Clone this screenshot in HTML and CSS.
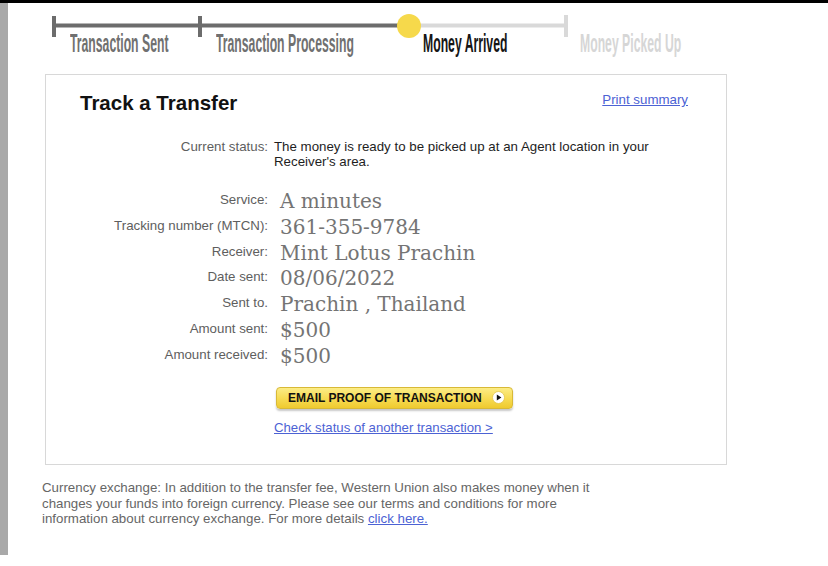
FILE: index.html
```html
<!DOCTYPE html>
<html lang="en">
<head>
<meta charset="utf-8">
<title>Track a Transfer</title>
<link rel="stylesheet" href="styles.css">
</head>
<body>
<div class="topbar"></div>
<div class="screen">
  <div class="rail"></div>
  <main class="main">
    <div class="stepper">
      <svg class="track" width="820" height="37" viewBox="0 0 820 37" aria-hidden="true">
        <line x1="46" y1="22.5" x2="401" y2="22.5" stroke="#6c6c6c" stroke-width="4"/>
        <line x1="401" y1="22.5" x2="558" y2="22.5" stroke="#d9d9d9" stroke-width="4"/>
        <rect x="44" y="13" width="4" height="21" fill="#6c6c6c"/>
        <rect x="190" y="13" width="4" height="21" fill="#6c6c6c"/>
        <rect x="556" y="12" width="4" height="22" fill="#d9d9d9"/>
        <circle cx="401" cy="23" r="12" fill="#f6d94b"/>
      </svg>
      <div class="step-labels">
        <div class="step s1 done"><span class="step-text">Transaction Sent</span></div>
        <div class="step s2 done"><span class="step-text">Transaction Processing</span></div>
        <div class="step s3 current"><span class="step-text">Money Arrived</span></div>
        <div class="step s4 todo"><span class="step-text">Money Picked Up</span></div>
      </div>
    </div>

    <section class="card">
      <div class="card-head">
        <h1 class="title">Track a Transfer</h1>
        <a class="link print" href="#">Print summary</a>
      </div>

      <div class="status">
        <div class="label">Current status:</div>
        <div class="status-value">The money is ready to be picked up at an Agent location in your Receiver's area.</div>
      </div>

      <div class="details">
        <div class="label">Service:</div><div class="value">A minutes</div>
        <div class="label">Tracking number (MTCN):</div><div class="value">361-355-9784</div>
        <div class="label">Receiver:</div><div class="value">Mint Lotus Prachin</div>
        <div class="label">Date sent:</div><div class="value">08/06/2022</div>
        <div class="label">Sent to.</div><div class="value">Prachin , Thailand</div>
        <div class="label">Amount sent:</div><div class="value">$500</div>
        <div class="label">Amount received:</div><div class="value">$500</div>
      </div>

      <div class="actions">
        <a class="btn" href="#">
          <span class="btn-text">EMAIL PROOF OF TRANSACTION</span>
          <svg class="btn-icon" width="13" height="13" viewBox="0 0 13 13" aria-hidden="true">
            <circle cx="6.5" cy="6.5" r="6" fill="#ffffff" stroke="#e2c547" stroke-width="0.8"/>
            <polygon points="4.8,3.6 9.4,6.5 4.8,9.4" fill="#111111"/>
          </svg>
        </a>
        <a class="link another" href="#">Check status of another transaction &gt;</a>
      </div>
    </section>

    <p class="note">Currency exchange: In addition to the transfer fee, Western Union also makes money when it changes your funds into foreign currency. Please see our terms and conditions for more information about currency exchange. For more details <a class="link" href="#">click here.</a></p>
  </main>
</div>
</body>
</html>
```

FILE: styles.css
```css
* { box-sizing: border-box; }

html, body {
  margin: 0;
  padding: 0;
  background: #ffffff;
}

body {
  width: 828px;
  height: 566px;
  overflow: hidden;
  font-family: "Liberation Sans", Arial, sans-serif;
  color: #222222;
}

.topbar {
  height: 3px;
  background: #000000;
}

.screen {
  display: flex;
}

.rail {
  width: 8px;
  height: 552px;
  background: #a9a9a9;
  flex: none;
}

.main {
  width: 820px;
  flex: none;
}

/* stepper */
.track {
  display: block;
}

.step-labels {
  display: flex;
  margin-top: -10px;
  padding-left: 62px;
  height: 26px;
}

.step {
  flex: none;
  height: 26px;
  white-space: nowrap;
}

.s1 { width: 146px; }
.s2 { width: 207px; }
.s3 { width: 157px; }
.s4 { width: 200px; }

.step-text {
  display: inline-block;
  font-size: 26px;
  line-height: 26px;
  font-weight: bold;
  transform: scaleX(0.47);
  transform-origin: 0 50%;
}

.done .step-text { color: #707070; }
.current .step-text { color: #151515; }
.todo .step-text { color: #d6d6d6; }

/* card */
.card {
  margin: 18px 0 0 37px;
  width: 682px;
  height: 391px;
  border: 1px solid #d8d8d8;
}

.card-head {
  display: flex;
  justify-content: space-between;
  align-items: flex-start;
  padding: 16px 38px 0 34px;
}

.title {
  margin: 0;
  font-size: 20.5px;
  line-height: 24px;
  font-weight: bold;
  color: #111111;
}

.link {
  color: #4c62d4;
  text-decoration: underline;
}

.print {
  margin-top: 1px;
  font-size: 13.3px;
  line-height: 15px;
}

.label {
  font-size: 13.3px;
  color: #5e5e5e;
  text-align: right;
  white-space: nowrap;
}

.status {
  display: grid;
  grid-template-columns: 222px 1fr;
  column-gap: 6px;
  margin-top: 24px;
  line-height: 15px;
}

.status .label { line-height: 15px; }

.status-value {
  font-size: 13.3px;
  line-height: 15px;
  color: #1e1e1e;
  max-width: 400px;
}

.details {
  display: grid;
  grid-template-columns: 222px 1fr;
  grid-auto-rows: 25.8px;
  column-gap: 12px;
  align-items: start;
  margin-top: 19px;
}

.details .label {
  line-height: 24px;
}

.value {
  font-family: "DejaVu Serif", "Liberation Serif", serif;
  font-size: 20px;
  line-height: 26px;
  color: #747474;
  white-space: nowrap;
}

.actions {
  display: flex;
  flex-direction: column;
  align-items: flex-start;
  margin-top: 18px;
}

.btn {
  display: flex;
  align-items: center;
  margin-left: 230px;
  width: 237px;
  height: 22px;
  padding: 0 7px 0 11px;
  justify-content: space-between;
  border: 1px solid #d8b937;
  border-radius: 4px;
  background: linear-gradient(#fcec86 0%, #f7dc55 50%, #efca2f 100%);
  box-shadow: 0 2px 2px rgba(0, 0, 0, 0.22);
  text-decoration: none;
}

.btn-text {
  font-size: 12px;
  font-weight: bold;
  color: #111111;
  line-height: 20px;
  white-space: nowrap;
}

.btn-icon {
  display: block;
  flex: none;
}

.another {
  margin: 11px 0 0 228px;
  font-size: 13.2px;
  line-height: 15px;
}

/* footnote */
.note {
  margin: 15px 0 0 34px;
  width: 580px;
  font-size: 13.3px;
  line-height: 15.5px;
  color: #666666;
}
```
